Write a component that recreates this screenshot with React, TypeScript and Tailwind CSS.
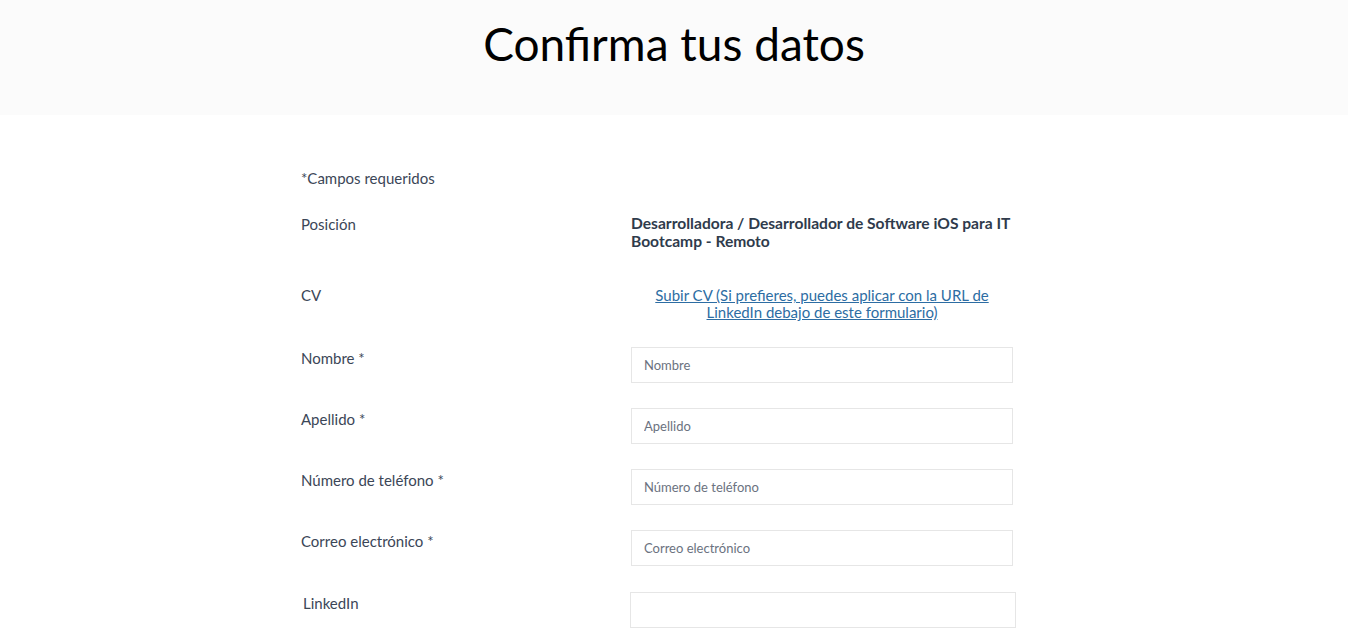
const fields = [
	{ label: "Nombre *", placeholder: "Nombre" },
	{ label: "Apellido *", placeholder: "Apellido" },
	{ label: "Número de teléfono *", placeholder: "Número de teléfono" },
	{ label: "Correo electrónico *", placeholder: "Correo electrónico" },
]

export default function App() {
	return (
		<div className="min-h-screen bg-white font-['Lato',sans-serif]">
			<div className="flex h-[115px] justify-center bg-[#fbfbfb] pt-[14px]">
				<h1 className="text-[46px] leading-[60px] text-black">Confirma tus datos</h1>
			</div>

			<div className="mx-auto w-[746px] pt-[52px] text-[15px] text-[#3b4657]">
				<p className="leading-[22px]">*Campos requeridos</p>

				<div className="mt-[24px] flex">
					<div className="w-[330px] leading-[22px]">Posición</div>
					<div className="w-[396px] pt-px text-[15.6px] leading-[18px] font-bold text-[#2f3b4c]">
						Desarrolladora / Desarrollador de Software iOS para IT Bootcamp - Remoto
					</div>
				</div>

				<div className="mt-[34px] flex">
					<div className="w-[330px] leading-[22px]">CV</div>
					<a
						href="#"
						className="w-[382px] pt-[3px] text-center leading-[17px] text-[#2d6da3] underline"
					>
						Subir CV (Si prefieres, puedes aplicar con la URL de LinkedIn debajo de este formulario)
					</a>
				</div>

				<div className="mt-[26px] flex flex-col gap-[25px]">
					{fields.map((field) => (
						<div key={field.label} className="flex">
							<label className="w-[330px] leading-[22px]">{field.label}</label>
							<input
								placeholder={field.placeholder}
								className="h-[36px] w-[382px] border border-[#e6e6e6] px-3 text-[13px] text-[#3b4657] placeholder:text-[#6b7280] focus:outline-none"
							/>
						</div>
					))}
					<div className="flex pt-px">
						<label className="w-[329px] pl-[2px] leading-[22px]">LinkedIn</label>
						<input className="h-[36px] w-[386px] border border-[#e6e6e6] px-3 text-[13px] focus:outline-none" />
					</div>
				</div>
			</div>
		</div>
	)
}
